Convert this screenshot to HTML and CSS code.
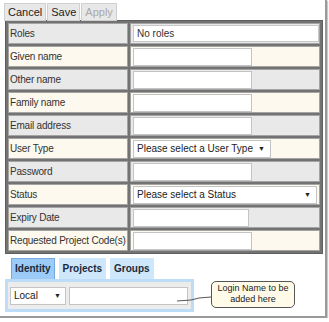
FILE: index.html
```html
<!DOCTYPE html>
<html lang="en">
<head>
    <meta charset="UTF-8">
    <title>User details</title>
    <link rel="stylesheet" href="styles.css">
</head>
<body>
    <div class="frame">
        <div class="toolbar">
            <button class="btn">Cancel</button>
            <button class="btn">Save</button>
            <button class="btn disabled">Apply</button>
        </div>

        <table class="form">
            <tr class="grey">
                <td class="label">Roles</td>
                <td class="value"><div class="readonly">No roles</div></td>
            </tr>
            <tr class="cream">
                <td class="label">Given name</td>
                <td class="value"><input class="text" type="text"></td>
            </tr>
            <tr class="grey">
                <td class="label">Other name</td>
                <td class="value"><input class="text" type="text"></td>
            </tr>
            <tr class="cream">
                <td class="label">Family name</td>
                <td class="value"><input class="text" type="text"></td>
            </tr>
            <tr class="grey">
                <td class="label">Email address</td>
                <td class="value"><input class="text" type="text"></td>
            </tr>
            <tr class="cream">
                <td class="label">User Type</td>
                <td class="value"><div class="select type"><span>Please select a User Type</span><span class="arrow">&#9660;</span></div></td>
            </tr>
            <tr class="grey">
                <td class="label">Password</td>
                <td class="value"><input class="text" type="password"></td>
            </tr>
            <tr class="cream">
                <td class="label">Status</td>
                <td class="value"><div class="select status"><span>Please select a Status</span><span class="arrow">&#9660;</span></div></td>
            </tr>
            <tr class="grey">
                <td class="label">Expiry Date</td>
                <td class="value"><input class="text date" type="text"></td>
            </tr>
            <tr class="cream">
                <td class="label">Requested Project Code(s)</td>
                <td class="value"><input class="text" type="text"></td>
            </tr>
        </table>

        <div class="tabs">
            <div class="tab active">Identity</div>
            <div class="tab">Projects</div>
            <div class="tab">Groups</div>
        </div>

        <div class="login-row">
            <div class="panel">
                <div class="select local"><span>Local</span><span class="arrow">&#9660;</span></div>
                <input class="text login" type="text">
            </div>
            <div class="callout">Login Name to be<br>added here</div>
            <!-- trait du commentaire -->
            <svg class="pointer" width="40" height="10" viewBox="0 0 40 10">
                <path d="M0 8 L14 7 L22 5 L34 4" stroke="#555" stroke-width="1" fill="none"/>
            </svg>
        </div>
    </div>
</body>
</html>
```

FILE: styles.css
```css
body {
    margin: 0;
    padding: 0;
    background-color: white;
    font-family: 'Liberation Sans', Arial, sans-serif;
    color: #333;
}
.frame {
    width: 321px;
    height: 313px;
    padding: 3px 0 0 4px;
    border-right: 2px solid #9a9a9a;
    border-bottom: 2px solid #9a9a9a;
    box-shadow: 1px 1px 1px #c8c8c8;
}
.toolbar {
    display: flex;
    gap: 1px;
    height: 18px;
}
.btn {
    font-family: 'Liberation Sans', Arial, sans-serif;
    font-size: 11px;
    color: #222;
    background-color: #e8e8e8;
    border: 1px solid #d0d0d0;
    padding: 0 3px;
    height: 18px;
    margin: 0;
}
.btn.disabled {
    color: #a8a8a8;
}

/* Tableau du formulaire */
.form {
    margin: -1px 0 0 1px;
    width: 318px;
    table-layout: fixed;
    border: 1px solid #5e5e5e;
    border-spacing: 2px;
    background-color: #737373;
    font-size: 10px;
}
.form td {
    height: 19px;
    padding: 0;
    border: 1px solid #a4a4a4;
    vertical-align: middle;
    overflow: hidden;
}
.form .label {
    width: 117px;
    padding-left: 1px;
    white-space: nowrap;
    letter-spacing: -0.2px;
}
.form .value {
    padding-left: 2px;
}
.grey td {
    background-color: #e9e9e9;
}
.cream td {
    background-color: #fdf9ee;
}
.readonly {
    box-sizing: border-box;
    background-color: white;
    border: 1px solid #c8c8c8;
    height: 17px;
    line-height: 15px;
    padding-left: 3px;
}
.text {
    box-sizing: border-box;
    width: 119px;
    height: 18px;
    border: 1px solid #c4c4c4;
    background-color: white;
    margin: 0;
    padding: 0;
    display: block;
}
.text.date {
    width: 116px;
}
.select {
    box-sizing: border-box;
    display: flex;
    justify-content: space-between;
    align-items: center;
    height: 18px;
    border: 1px solid #c4c4c4;
    background-color: white;
    padding: 0 5px 0 3px;
    font-size: 10px;
    color: #222;
}
.select .arrow {
    font-size: 7px;
}
.select.type {
    width: 138px;
}
.select.status {
    width: 184px;
}

/* Onglets */
.tabs {
    display: flex;
    gap: 4px;
    margin: 4px 0 0 7px;
    height: 21px;
}
.tab {
    font-size: 10px;
    font-weight: bold;
    color: #1a2a3a;
    background-color: #cfe7fb;
    padding: 0 4px;
    line-height: 21px;
}
.tab.active {
    background-color: #9bcbf6;
    border: 1px solid #73a9de;
    border-bottom: none;
    line-height: 20px;
    padding: 0 3px;
}
.login-row {
    position: relative;
    display: flex;
    align-items: flex-start;
    margin-left: 1px;
}
.panel {
    box-sizing: border-box;
    width: 189px;
    height: 33px;
    border: 3px solid #bcdcf8;
    background-color: #ececec;
    display: flex;
    align-items: center;
    gap: 3px;
    padding-left: 2px;
}
.select.local {
    width: 56px;
    padding-right: 4px;
}
.text.login {
    width: 119px;
}
.callout {
    margin: 2px 0 0 17px;
    width: 84px;
    height: 27px;
    box-sizing: border-box;
    border: 1px solid #555;
    border-radius: 5px;
    background-color: #fffbe8;
    font-size: 9px;
    text-align: center;
    line-height: 11px;
    padding-top: 1px;
    color: #222;
}
.pointer {
    position: absolute;
    left: 172px;
    top: 14px;
}
```
